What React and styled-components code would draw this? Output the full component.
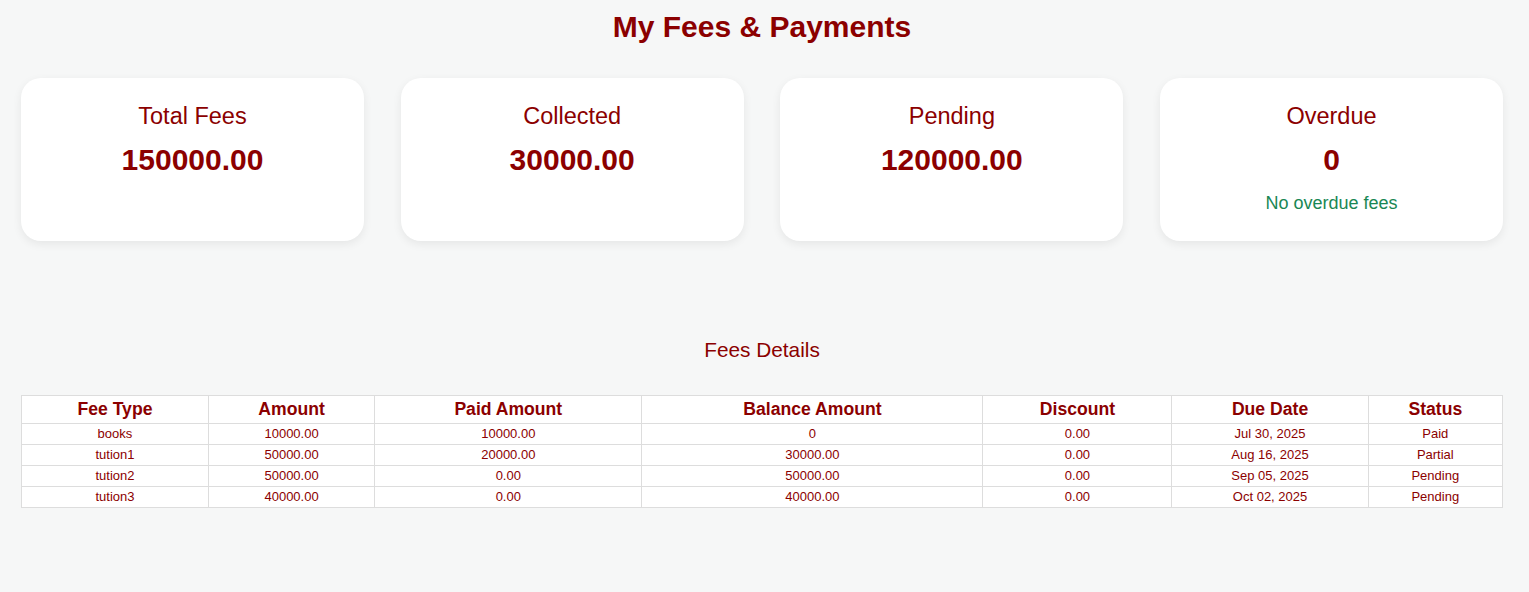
import styled, { createGlobalStyle } from 'styled-components';

const GlobalStyle = createGlobalStyle`
    body {
        margin: 0;
        background: #f6f7f7;
        font-family: 'Liberation Sans', Arial, sans-serif;
    }
`

const PageWrapper = styled.div`
    padding: 10px 26px 40px 21px;
    color: #8b0000;
`

const PageTitle = styled.h1`
    margin: 0;
    font-size: 30px;
    line-height: 34px;
    font-weight: bold;
    text-align: center;
    color: #8b0000;
`

const CardGrid = styled.div`
    display: grid;
    grid-template-columns: repeat(4, 1fr);
    gap: 36.7px;
    margin-top: 34px;
`

const Card = styled.div`
    background: #fff;
    border-radius: 20px;
    box-shadow: 0 3px 10px rgba(0, 0, 0, 0.07);
    padding: 24px 16px 27px 16px;
    min-height: 112px;
    display: flex;
    flex-direction: column;
    align-items: center;
`

const CardLabel = styled.div`
    font-size: 23.5px;
    line-height: 28px;
    color: #8b0000;
`

const CardValue = styled.div`
    margin-top: 13px;
    font-size: 30px;
    line-height: 34px;
    font-weight: bold;
    color: #8b0000;
`

const CardNote = styled.div`
    margin-top: 16px;
    font-size: 18px;
    line-height: 21px;
    color: #198754;
`

const SectionTitle = styled.h2`
    margin: 97px 0 0 0;
    font-size: 20.8px;
    line-height: 24px;
    font-weight: normal;
    text-align: center;
    color: #8b0000;
`

const FeeTable = styled.table`
    width: 100%;
    margin-top: 33px;
    border-collapse: collapse;
    table-layout: fixed;
    background: #fff;
`

const HeadCell = styled.th`
    width: ${props => props.$w};
    border: 1px solid #dddddd;
    padding: 2.5px 4px 4.5px 4px;
    font-size: 17.6px;
    line-height: 20px;
    font-weight: bold;
    text-align: center;
    color: #8b0000;
`

const BodyCell = styled.td`
    border: 1px solid #dddddd;
    padding: 2px 4px;
    font-size: 13px;
    line-height: 16px;
    text-align: center;
    color: #8b0000;
`

const summary = [
    { label: 'Total Fees', value: '150000.00' },
    { label: 'Collected', value: '30000.00' },
    { label: 'Pending', value: '120000.00' },
    { label: 'Overdue', value: '0', note: 'No overdue fees' },
];

const columns = [
    { title: 'Fee Type', w: '12.55%' },
    { title: 'Amount', w: '11.1%' },
    { title: 'Paid Amount', w: '18.2%' },
    { title: 'Balance Amount', w: '23.4%' },
    { title: 'Discount', w: '12.7%' },
    { title: 'Due Date', w: '13.2%' },
    { title: 'Status', w: '8.85%' },
];

const fees = [
    ['books', '10000.00', '10000.00', '0', '0.00', 'Jul 30, 2025', 'Paid'],
    ['tution1', '50000.00', '20000.00', '30000.00', '0.00', 'Aug 16, 2025', 'Partial'],
    ['tution2', '50000.00', '0.00', '50000.00', '0.00', 'Sep 05, 2025', 'Pending'],
    ['tution3', '40000.00', '0.00', '40000.00', '0.00', 'Oct 02, 2025', 'Pending'],
];

const App = () => {
    return (
        <>
            <GlobalStyle />
            <PageWrapper>
                <PageTitle>My Fees &amp; Payments</PageTitle>
                <CardGrid>
                    {summary.map(item => (
                        <Card key={item.label}>
                            <CardLabel>{item.label}</CardLabel>
                            <CardValue>{item.value}</CardValue>
                            {item.note && <CardNote>{item.note}</CardNote>}
                        </Card>
                    ))}
                </CardGrid>
                <SectionTitle>Fees Details</SectionTitle>
                <FeeTable>
                    <thead>
                        <tr>
                            {columns.map(col => (
                                <HeadCell key={col.title} $w={col.w}>{col.title}</HeadCell>
                            ))}
                        </tr>
                    </thead>
                    <tbody>
                        {fees.map(row => (
                            <tr key={row[0]}>
                                {row.map((cell, i) => (
                                    <BodyCell key={i}>{cell}</BodyCell>
                                ))}
                            </tr>
                        ))}
                    </tbody>
                </FeeTable>
            </PageWrapper>
        </>
    )
}

export default App;
